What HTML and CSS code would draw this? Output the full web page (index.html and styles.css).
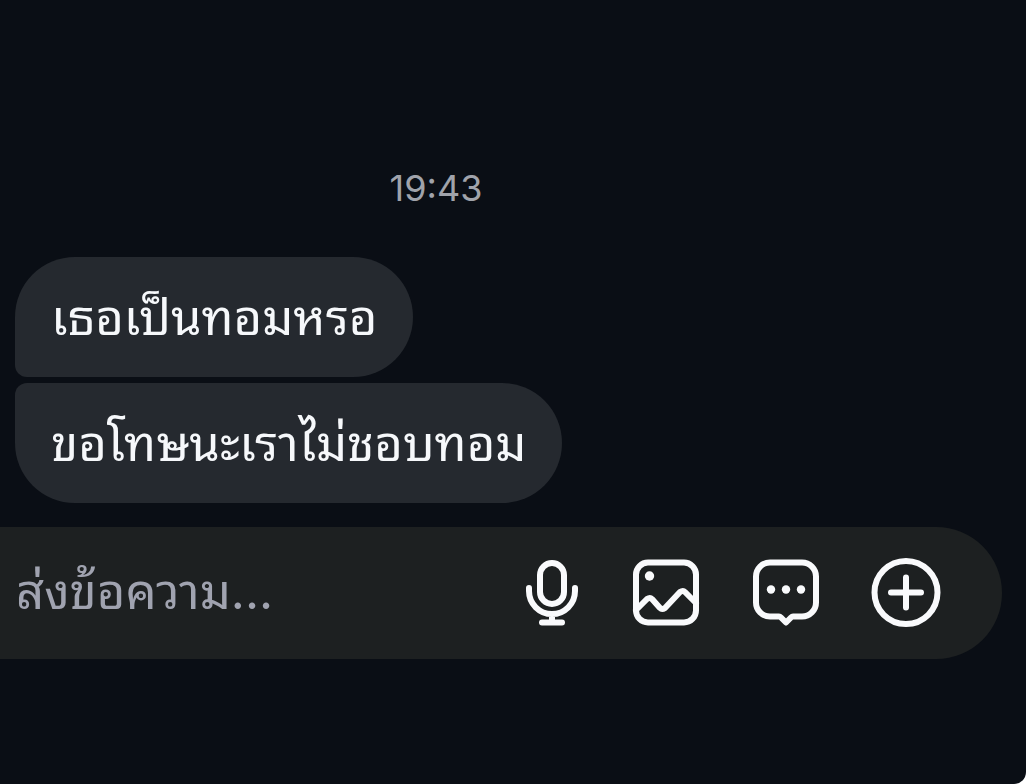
FILE: index.html
```html
<!DOCTYPE html>
<html lang="th">

<head>
    <meta charset="UTF-8">
    <meta name="viewport" content="width=device-width, initial-scale=1.0">
    <title>Chat</title>
    <link rel="stylesheet" href="styles.css">
</head>

<body>
    <main class="chat">
        <time class="timestamp">19:43</time>

        <!-- Messages -->
        <div class="messages">
            <p class="bubble bubble-first">เธอเป็นทอมหรอ</p>
            <p class="bubble bubble-last">ขอโทษนะเราไม่ชอบทอม</p>
        </div>

        <!-- Composer -->
        <form class="composer">
            <input type="text" class="message-input" placeholder="ส่งข้อความ..." aria-label="ส่งข้อความ">
            <div class="actions">
                <button type="button" class="action" aria-label="Voice">
                    <svg viewBox="0 0 72 72">
                        <rect x="30" y="6" width="24" height="41" rx="12"/>
                        <path d="M19 31v3a23 23 0 0 0 46 0v-3M42 58v7M32 65.500h20"/>
                    </svg>
                </button>
                <button type="button" class="action" aria-label="Photo">
                    <svg viewBox="0 0 72 72">
                        <rect x="6" y="5.500" width="60" height="60" rx="12"/>
                        <circle class="dot" cx="19.500" cy="19" r="4.700"/>
                        <path d="M6 53l11-11q3-2 5 0l8 9q2 2 5 0l15-16q3-2 5 0l11 11"/>
                    </svg>
                </button>
                <button type="button" class="action" aria-label="Quick reply">
                    <svg viewBox="0 0 72 72">
                        <path d="M20 5.500h32a14 14 0 0 1 14 14v26a14 14 0 0 1-14 14H43q-1 0-2 1l-5 5-5-5q-1-1-2-1H20A14 14 0 0 1 6 45.500V19.500A14 14 0 0 1 20 5.500z"/>
                        <circle class="dot" cx="21" cy="32.500" r="4.200"/>
                        <circle class="dot" cx="36" cy="32.500" r="4.200"/>
                        <circle class="dot" cx="51" cy="32.500" r="4.200"/>
                    </svg>
                </button>
                <button type="button" class="action" aria-label="More">
                    <svg viewBox="0 0 72 72">
                        <circle cx="36" cy="35.500" r="31.500"/>
                        <path d="M36 20.500v30M21 35.500h30"/>
                    </svg>
                </button>
            </div>
        </form>
    </main>
</body>

</html>
```
FILE: styles.css
```css
* {
    box-sizing: border-box;
}

body {
    margin: 0;
    background-color: #fff;
    color: #f6f8fb;
    font-family: "Inter", "Noto Sans Thai Looped", "Loma", "Noto Sans", sans-serif;
}

.chat {
    display: flex;
    flex-direction: column;
    min-height: 100vh;
    padding: 164px 24px 0 0;
    border-bottom-right-radius: 12px;
    background-color: #0a0e15;
}

.timestamp {
    margin-right: 130px;
    color: #a0a3ab;
    font-size: 36px;
    line-height: 48px;
    text-align: center;
}

/* Messages */
.messages {
    display: flex;
    flex-direction: column;
    align-items: flex-start;
    gap: 6px;
    margin: 45px 0 24px 15px;
}

.bubble {
    margin: 0;
    padding: 31px 36px 29px;
    border-radius: 60px;
    background-color: #25292f;
    font-size: 49px;
    line-height: 60px;
}

.bubble-first {
    border-bottom-left-radius: 12px;
}

.bubble-last {
    border-top-left-radius: 12px;
}

/* Composer */
.composer {
    display: flex;
    align-items: center;
    height: 132px;
    padding: 0 60px 0 16px;
    border-radius: 0 66px 66px 0;
    background-color: #1d2021;
}

.message-input {
    flex: 1;
    min-width: 0;
    height: 72px;
    padding: 0 0 4px;
    border: 0;
    outline: 0;
    background: none;
    color: inherit;
    font: inherit;
    font-size: 49px;
}

.message-input::placeholder {
    color: #a0a3b0;
    opacity: 1;
}

.actions {
    display: flex;
    gap: 48px;
}

.action {
    width: 72px;
    height: 72px;
    padding: 0;
    border: 0;
    background: none;
    color: #f9fafc;
    cursor: pointer;
}

.action svg {
    display: block;
    fill: none;
    stroke: currentColor;
    stroke-width: 6;
    stroke-linecap: round;
    stroke-linejoin: round;
}

.action .dot {
    fill: currentColor;
    stroke: none;
}
```
